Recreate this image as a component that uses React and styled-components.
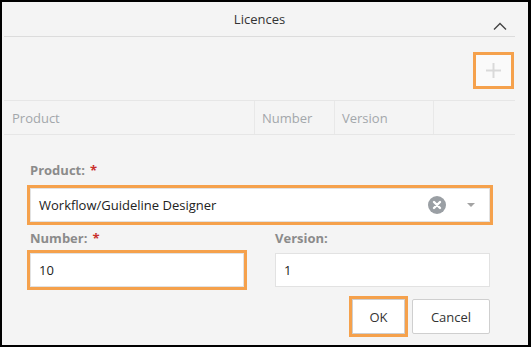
import React from 'react';
import styled, { createGlobalStyle, css } from 'styled-components';

const GlobalStyle = createGlobalStyle`
  html, body {
    margin: 0;
    padding: 0;
    background: #000;
  }
  body {
    font-family: "Open Sans", "Noto Sans", Arial, sans-serif;
  }
`;

const highlight = css`
  outline: 3px solid #f5a14c;
  outline-offset: 0;
  border-radius: 0;
`;

const Frame = styled.div`
  box-sizing: border-box;
  width: 531px;
  height: 347px;
  border: 2px solid #000;
  border-right-width: 3px;
  background: #f4f4f4;
  overflow: hidden;
`;

const Panel = styled.div`
  padding: 0 13px 0 2px;
`;

const Header = styled.div`
  display: grid;
  grid-template-columns: 1fr auto 1fr;
  align-items: center;
  height: 34px;
  border-bottom: 1px solid #dcdcdc;
`;

const Title = styled.div`
  grid-column: 2;
  font-size: 13px;
  color: #333;
`;

const Collapse = styled.svg`
  grid-column: 3;
  justify-self: end;
  align-self: end;
  margin: 0 8px 6px 0;
`;

const Toolbar = styled.div`
  display: flex;
  justify-content: flex-end;
  height: 63px;
  padding-top: 15px;
  box-sizing: border-box;
`;

const AddButton = styled.div`
  box-sizing: border-box;
  width: 41px;
  height: 37px;
  margin-right: 1px;
  border: 3px solid #f5a14c;
  background: #fafafa;
  display: flex;
  align-items: center;
  justify-content: center;
`;

const TableHead = styled.div`
  display: grid;
  grid-template-columns: 251px 80px 99px 1fr;
  height: 35px;
  box-sizing: border-box;
  border-top: 1px solid #e6e6e6;
  border-bottom: 1px solid #e6e6e6;
`;

const HeadCell = styled.div`
  display: flex;
  align-items: center;
  padding-left: ${(p) => p.pad || 8}px;
  font-size: 13px;
  color: #a3a7ab;
  border-right: ${(p) => (p.last ? 'none' : '1px solid #e8e8e8')};
`;

const Form = styled.div`
  width: 460px;
  margin-left: 28px;
  padding-top: 26px;
`;

const Label = styled.div`
  font-size: 13px;
  line-height: 18px;
  font-weight: 700;
  color: #8b8b8b;
  margin-bottom: ${(p) => p.gap || 6}px;
`;

const Required = styled.span`
  color: #c9302c;
  margin-left: 5px;
`;

const Field = styled.div`
  box-sizing: border-box;
  height: 34px;
  background: #fff;
  border: 1px solid #e2e2e2;
  display: flex;
  align-items: center;
  padding: 0 8px;
  font-size: 13px;
  color: #222;
  ${(p) => p.highlight && highlight};
`;

const SelectText = styled.span`
  flex: 1;
`;

const ClearIcon = styled.svg`
  margin-right: 21px;
`;

const Caret = styled.span`
  width: 0;
  height: 0;
  border-left: 4px solid transparent;
  border-right: 4px solid transparent;
  border-top: 4px solid #a3a3a3;
  margin-right: 6px;
`;

const Row = styled.div`
  display: grid;
  grid-template-columns: 214px 215px;
  column-gap: 31px;
  margin-top: 7px;
`;

const Actions = styled.div`
  display: flex;
  justify-content: flex-end;
  gap: 7px;
  margin-top: 12px;
`;

const Button = styled.button`
  box-sizing: border-box;
  height: 35px;
  width: ${(p) => p.w}px;
  background: #fff;
  border: 1px solid #cfcfcf;
  border-radius: 2px;
  font-family: inherit;
  font-size: 13px;
  color: #333;
  padding: 0;
  ${(p) => p.highlight && highlight};
`;

export default function App() {
  return (
    <>
      <GlobalStyle />
      <Frame>
        <Panel>
          <Header>
            <Title>Licences</Title>
            <Collapse width="14" height="8" viewBox="0 0 14 8">
              <polyline points="1,7.5 7,1.5 13,7.5" fill="none" stroke="#444" strokeWidth="1.4" />
            </Collapse>
          </Header>
          <Toolbar>
            <AddButton>
              <svg width="17" height="17" viewBox="0 0 17 17">
                <path d="M8.5 1v15M1 8.5h15" stroke="#d9d9d9" strokeWidth="2" />
              </svg>
            </AddButton>
          </Toolbar>
          <TableHead>
            <HeadCell>Product</HeadCell>
            <HeadCell pad={7}>Number</HeadCell>
            <HeadCell pad={7}>Version</HeadCell>
            <HeadCell last />
          </TableHead>
        </Panel>
        <Form>
          <Label gap={9}>
            Product:<Required>*</Required>
          </Label>
          <Field highlight>
            <SelectText>Workflow/Guideline Designer</SelectText>
            <ClearIcon width="18" height="18" viewBox="0 0 18 18">
              <circle cx="9" cy="9" r="9" fill="#9a9fa4" />
              <path d="M6 6l6 6M12 6l-6 6" stroke="#fff" strokeWidth="2.4" strokeLinecap="round" />
            </ClearIcon>
            <Caret />
          </Field>
          <Row>
            <div>
              <Label>
                Number:<Required>*</Required>
              </Label>
              <Field highlight>10</Field>
            </div>
            <div>
              <Label>Version:</Label>
              <Field>1</Field>
            </div>
          </Row>
          <Actions>
            <Button w={53} highlight>OK</Button>
            <Button w={78}>Cancel</Button>
          </Actions>
        </Form>
      </Frame>
    </>
  );
}
